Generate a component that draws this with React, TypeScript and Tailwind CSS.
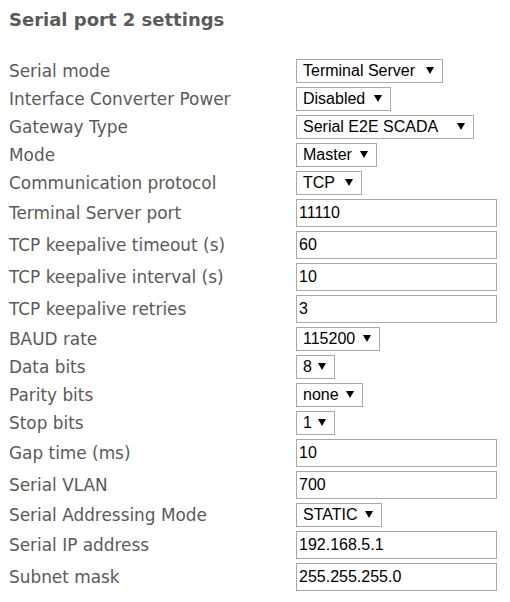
import React from "react";

type Row =
  | { label: string; kind: "select"; value: string; w: number }
  | { label: string; kind: "input"; value: string };

const rows: Row[] = [
  { label: "Serial mode", kind: "select", value: "Terminal Server", w: 147 },
  { label: "Interface Converter Power", kind: "select", value: "Disabled", w: 95 },
  { label: "Gateway Type", kind: "select", value: "Serial E2E SCADA", w: 178 },
  { label: "Mode", kind: "select", value: "Master", w: 81 },
  { label: "Communication protocol", kind: "select", value: "TCP", w: 66 },
  { label: "Terminal Server port", kind: "input", value: "11110" },
  { label: "TCP keepalive timeout (s)", kind: "input", value: "60" },
  { label: "TCP keepalive interval (s)", kind: "input", value: "10" },
  { label: "TCP keepalive retries", kind: "input", value: "3" },
  { label: "BAUD rate", kind: "select", value: "115200", w: 84 },
  { label: "Data bits", kind: "select", value: "8", w: 39 },
  { label: "Parity bits", kind: "select", value: "none", w: 67 },
  { label: "Stop bits", kind: "select", value: "1", w: 39 },
  { label: "Gap time (ms)", kind: "input", value: "10" },
  { label: "Serial VLAN", kind: "input", value: "700" },
  { label: "Serial Addressing Mode", kind: "select", value: "STATIC", w: 86 },
  { label: "Serial IP address", kind: "input", value: "192.168.5.1" },
  { label: "Subnet mask", kind: "input", value: "255.255.255.0" },
];

function Arrow() {
  return (
    <svg width="8" height="7" viewBox="0 0 8 7" className="ml-auto shrink-0 mb-[2px]">
      <path d="M0 0 H8 L4 7 Z" fill="#000" />
    </svg>
  );
}

export default function App() {
  return (
    <div className="w-[510px] h-[602px] bg-white pl-[9px] overflow-hidden">
      <h1 className="pt-[8px] text-[18px] leading-[24px] font-bold text-[#5a5a5a] [font-family:'DejaVu_Sans',sans-serif]">
        Serial port 2 settings
      </h1>
      <div className="mt-[27px] flex flex-col gap-[4px]">
        {rows.map((r) => (
          <div key={r.label} className="flex items-center">
            <div className="w-[287px] shrink-0 text-[16.9px] leading-[20px] text-[#5a5a5a] [font-family:'DejaVu_Sans',sans-serif]">
              {r.label}
            </div>
            {r.kind === "select" ? (
              <div
                className="h-[24px] flex items-center border border-[#a9a9a9] bg-white pl-[6px] pr-[8px] text-[16px] text-black [font-family:'Liberation_Sans',Arial,sans-serif] whitespace-nowrap"
                style={{ width: r.w }}
              >
                <span>{r.value}</span>
                <Arrow />
              </div>
            ) : (
              <input
                readOnly
                value={r.value}
                className="w-[201px] h-[28px] border border-[#a9a9a9] bg-white px-[2px] text-[16px] text-black outline-none [font-family:'Liberation_Sans',Arial,sans-serif]"
              />
            )}
          </div>
        ))}
      </div>
    </div>
  );
}
